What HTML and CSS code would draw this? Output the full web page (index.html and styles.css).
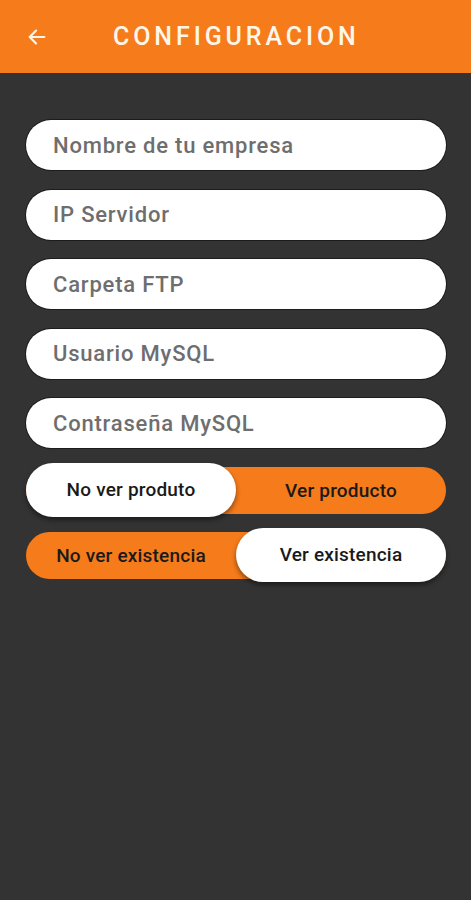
FILE: index.html
```html
<!DOCTYPE html>
<html lang="es">
<head>
  <meta charset="UTF-8">
  <title>Configuracion</title>
  <link rel="stylesheet" href="styles.css">
</head>
<body>
  <header class="topbar">
    <button class="back" aria-label="Volver">
      <svg width="22" height="22" viewBox="0 0 24 24">
        <path d="M20 12H5M11 5l-7 7 7 7" fill="none" stroke="currentColor" stroke-width="2.4" stroke-linecap="round" stroke-linejoin="round"/>
      </svg>
    </button>
    <h1>CONFIGURACION</h1>
  </header>

  <main class="form">
    <input class="field" type="text" placeholder="Nombre de tu empresa">
    <input class="field" type="text" placeholder="IP Servidor">
    <input class="field" type="text" placeholder="Carpeta FTP">
    <input class="field" type="text" placeholder="Usuario MySQL">
    <input class="field" type="password" placeholder="Contraseña MySQL">

    <div class="toggle">
      <span class="opt on">No ver produto</span>
      <span class="opt">Ver producto</span>
    </div>
    <div class="toggle second">
      <span class="opt">No ver existencia</span>
      <span class="opt on">Ver existencia</span>
    </div>
  </main>
</body>
</html>
```

FILE: styles.css
```css
body {
  margin: 0;
  background: #333333;
  font-family: Roboto, "Liberation Sans", sans-serif;
  min-height: 100vh;
}

.topbar {
  height: 73px;
  background: #f57b1b;
  display: flex;
  align-items: center;
  padding: 0 0 0 26px;
  box-sizing: border-box;
}

.back {
  background: none;
  border: none;
  padding: 0;
  color: #fff6ea;
  display: flex;
}

.topbar h1 {
  margin: 0 0 0 65px;
  font-size: 25px;
  font-weight: 500;
  letter-spacing: 3.9px;
  color: #fff6ea;
}

.form {
  padding: 47px 25px 0 26px;
  display: flex;
  flex-direction: column;
}

.field {
  height: 50px;
  border: none;
  border-radius: 25px;
  background: #fff;
  box-shadow: 0 0 0 1px #1c1c1c;
  padding: 0 0 0 27px;
  margin-bottom: 19.5px;
  font-family: inherit;
  font-size: 22px;
  font-weight: 500;
  letter-spacing: 0.8px;
  color: #555;
  outline: none;
}

.field::placeholder {
  color: #6e6e6e;
}

.toggle {
  display: flex;
  align-items: center;
  height: 47px;
  border-radius: 24px;
  background: #f57b1b;
  margin-top: -1px;
}

.toggle.second {
  margin-top: 18px;
}

.opt {
  flex: 1;
  text-align: center;
  font-size: 19px;
  font-weight: 500;
  letter-spacing: 0.2px;
  color: #1a1a1a;
}

.opt.on {
  height: 54px;
  line-height: 54px;
  background: #fff;
  border-radius: 27px;
  box-shadow: 0 3px 5px rgba(0, 0, 0, 0.45);
}
```
